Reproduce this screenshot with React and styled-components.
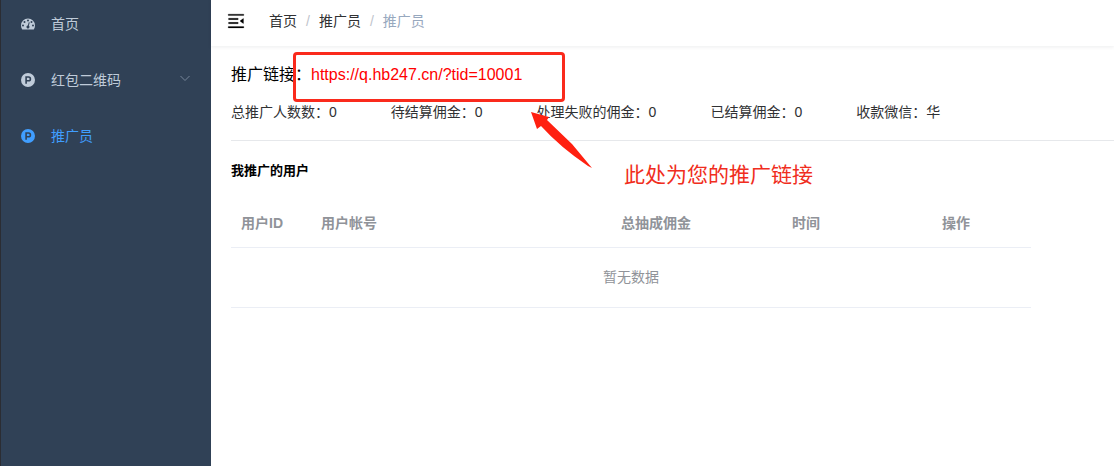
import React from "react";
import styled, { createGlobalStyle } from "styled-components";

const menu = [
  { label: "首页", icon: "dashboard" },
  { label: "红包二维码", icon: "parking", sub: true },
  { label: "推广员", icon: "parking", active: true },
];

const stats = [
  { label: "总推广人数数", value: "0" },
  { label: "待结算佣金", value: "0" },
  { label: "处理失败的佣金", value: "0" },
  { label: "已结算佣金", value: "0" },
  { label: "收款微信", value: "华" },
];

const columns = [
  { title: "用户ID", width: 80 },
  { title: "用户帐号", width: 270 },
  { title: "总抽成佣金", width: 150, center: true },
  { title: "时间", width: 150, center: true },
  { title: "操作", width: 150, center: true },
];

const DashboardIcon = () => (
  <svg viewBox="0 0 128 100" width="14" height="14" fill="currentColor" aria-hidden="true">
    <path
      fillRule="evenodd"
      d="M64 0a64 64 0 0 1 64 63.6c0 12.4-3.4 23.8-10.1 34.3-.9 1.4-2.2 2.1-3.8 2.1H13.9c-1.7 0-3-.7-3.8-2.1C3.4 87.5 0 76 0 63.6A64 64 0 0 1 64 0zM18.3 54.5a9.1 9.1 0 1 0 0 18.2 9.1 9.1 0 0 0 0-18.2zM32 22.7a9.1 9.1 0 1 0 0 18.2 9.1 9.1 0 0 0 0-18.2zM64 9.1a9.1 9.1 0 1 0 0 18.2 9.1 9.1 0 0 0 0-18.2zM96 22.7a9.1 9.1 0 1 0 0 18.2 9.1 9.1 0 0 0 0-18.2zM109.7 54.5a9.1 9.1 0 1 0 0 18.2 9.1 9.1 0 0 0 0-18.2zM71.7 66l7.2-27.1c.3-1.2.1-2.4-.5-3.5-.6-1-1.6-1.7-2.8-2-1.2-.4-2.3-.2-3.4.4-1.1.6-1.8 1.6-2.1 2.8l-7.2 27.1c-2.9.3-5.4 1.3-7.7 3.1-2.2 1.8-3.7 4.2-4.5 7-.9 3.6-.5 7.1 1.4 10.4 1.9 3.2 4.7 5.3 8.4 6.3 3.7.9 7.1.5 10.4-1.4 3.3-1.9 5.4-4.7 6.4-8.3.7-2.9.6-5.7-.5-8.4-1-2.7-2.7-4.8-5.1-6.4z"
    />
  </svg>
);

const ParkingIcon = () => (
  <svg viewBox="0 0 14 14" width="14" height="14" fill="currentColor" aria-hidden="true">
    <path
      fillRule="evenodd"
      d="M7 0a7 7 0 1 1 0 14A7 7 0 0 1 7 0zM4.3 3.3v7.4h1.6V8.5h1.7a2.6 2.6 0 0 0 0-5.2zM5.9 4.7h1.5a1.2 1.2 0 0 1 0 2.4H5.9z"
    />
  </svg>
);

const App = () => {
  return (
    <>
      <GlobalStyle />
      <Layout>
        <Sidebar>
          <MenuList>
            {menu.map((item) => (
              <li key={item.label}>
                <MenuLink href="#" $active={item.active}>
                  {item.icon === "dashboard" ? <DashboardIcon /> : <ParkingIcon />}
                  <span>{item.label}</span>
                  {item.sub && (
                    <Chevron viewBox="0 0 12 12" aria-hidden="true">
                      <path d="M1.5 2L6 6.5 10.5 2" />
                    </Chevron>
                  )}
                </MenuLink>
              </li>
            ))}
          </MenuList>
        </Sidebar>

        <Main>
          <Navbar>
            <Hamburger type="button" aria-label="menu">
              <svg viewBox="0 0 1024 1024" width="20" height="20" aria-hidden="true">
                <path
                  transform="rotate(180 512 512)"
                  stroke="#000"
                  strokeWidth="12"
                  d="M408 442h480c4.4 0 8-3.6 8-8v-56c0-4.4-3.6-8-8-8H408c-4.4 0-8 3.6-8 8v56c0 4.4 3.6 8 8 8zm-8 204c0 4.4 3.6 8 8 8h480c4.4 0 8-3.6 8-8v-56c0-4.4-3.6-8-8-8H408c-4.4 0-8 3.6-8 8v56zm504-486H120c-4.4 0-8 3.6-8 8v56c0 4.4 3.6 8 8 8h784c4.4 0 8-3.6 8-8v-56c0-4.4-3.6-8-8-8zm0 632H120c-4.4 0-8 3.6-8 8v56c0 4.4 3.6 8 8 8h784c4.4 0 8-3.6 8-8v-56c0-4.4-3.6-8-8-8zM142.4 642.1L298.7 519a8.84 8.84 0 0 0 0-13.9L142.4 381.9c-5.8-4.6-14.4-.5-14.4 6.9v246.3a8.9 8.9 0 0 0 14.4 7z"
                />
              </svg>
            </Hamburger>
            <Breadcrumb>
              <a href="#">首页</a>
              <Separator>/</Separator>
              <a href="#">推广员</a>
              <Separator>/</Separator>
              <Current>推广员</Current>
            </Breadcrumb>
          </Navbar>

          <Content>
            <LinkRow>
              <span>推广链接：</span>
              <PromoLink href="#">https://q.hb247.cn/?tid=10001</PromoLink>
              <Highlight />
              <Arrow viewBox="0 0 64 58" aria-hidden="true">
                <path d="M1 0L19 5 17 8 42 32 62 56 58 54Q30 35 11 14L7 17z" />
              </Arrow>
              <Note>此处为您的推广链接</Note>
            </LinkRow>

            <Stats>
              {stats.map((item) => (
                <span key={item.label}>
                  {item.label}：{item.value}
                </span>
              ))}
            </Stats>

            <Divider />
            <Title>我推广的用户</Title>

            <Table>
              <colgroup>
                {columns.map((col) => (
                  <col key={col.title} style={{ width: col.width }} />
                ))}
              </colgroup>
              <thead>
                <tr>
                  {columns.map((col) => (
                    <HeadCell key={col.title} $center={col.center}>
                      {col.title}
                    </HeadCell>
                  ))}
                </tr>
              </thead>
              <tbody>
                <tr>
                  <EmptyCell colSpan={columns.length}>暂无数据</EmptyCell>
                </tr>
              </tbody>
            </Table>
          </Content>
        </Main>
      </Layout>
    </>
  );
};

export default App;

const GlobalStyle = createGlobalStyle`
  * {
    box-sizing: border-box;
  }

  body {
    margin: 0;
    background: #fff;
    color: #000;
    font-family: "Liberation Sans", "Noto Sans CJK SC", sans-serif;
    font-size: 14px;
    line-height: 20px;
  }

  a {
    color: inherit;
    text-decoration: none;
  }

  svg {
    display: block;
    flex-shrink: 0;
  }
`;

const Layout = styled.div`
  display: flex;
  min-height: 100vh;
`;

const Sidebar = styled.nav`
  width: 211px;
  flex-shrink: 0;
  background: #304156;
  border-left: 1px solid #2b2d33;
`;

const MenuList = styled.ul`
  display: flex;
  flex-direction: column;
  gap: 16px;
  margin: 0;
  padding: 4px 0;
  list-style: none;
`;

const MenuLink = styled.a`
  display: flex;
  align-items: center;
  gap: 16px;
  height: 40px;
  padding: 0 20px;
  color: ${({ $active }) => ($active ? "#409eff" : "#bfcbd9")};
`;

const Chevron = styled.svg`
  width: 12px;
  height: 12px;
  margin-left: auto;
  fill: none;
  stroke: #77869a;
  stroke-width: 1;
`;

const Main = styled.main`
  flex: 1;
  min-width: 0;
`;

const Navbar = styled.header`
  display: flex;
  align-items: center;
  gap: 23px;
  height: 46px;
  padding: 0 15px 5px;
  box-shadow: 0 1px 4px rgba(0, 21, 41, 0.08);
`;

const Hamburger = styled.button`
  padding: 0;
  border: 0;
  background: none;
  cursor: pointer;
`;

const Breadcrumb = styled.nav`
  display: flex;
  color: #303133;
`;

const Separator = styled.span`
  margin: 0 9px;
  color: #c0c4cc;
`;

const Current = styled.span`
  color: #97a8be;
`;

const Content = styled.div`
  padding: 17px 0 20px 20px;
`;

const LinkRow = styled.div`
  position: relative;
  display: flex;
  font-size: 16px;
  line-height: 24px;
`;

const PromoLink = styled.a`
  color: #f00;
`;

/* Callout drawn over the link row */
const Highlight = styled.div`
  position: absolute;
  top: -11px;
  left: 62px;
  width: 272px;
  height: 50px;
  border: 3px solid #fa2a1c;
  border-radius: 4px;
  pointer-events: none;
`;

const Arrow = styled.svg`
  position: absolute;
  top: 49px;
  left: 299px;
  width: 64px;
  height: 58px;
  fill: #ff2010;
`;

const Note = styled.span`
  position: absolute;
  top: 100px;
  left: 393px;
  color: #f02d20;
  font-size: 21px;
  white-space: nowrap;
`;

const Stats = styled.div`
  display: flex;
  flex-wrap: wrap;
  gap: 0 54px;
  margin-top: 15px;
  color: #303133;
`;

const Divider = styled.hr`
  margin: 18px 0 20px;
  border: 0;
  border-top: 1px solid #e6e8eb;
`;

const Title = styled.h5`
  margin: 0 0 18px;
  font-size: 13px;
  line-height: 20px;
`;

const Table = styled.table`
  width: 100%;
  max-width: 800px;
  table-layout: fixed;
  border-collapse: collapse;
  color: #909399;
`;

const HeadCell = styled.th`
  height: 48px;
  padding: 0 10px;
  border-bottom: 1px solid #ebeef5;
  text-align: ${({ $center }) => ($center ? "center" : "left")};
`;

const EmptyCell = styled.td`
  height: 60px;
  padding: 0;
  border-bottom: 1px solid #ebeef5;
  text-align: center;
`;
